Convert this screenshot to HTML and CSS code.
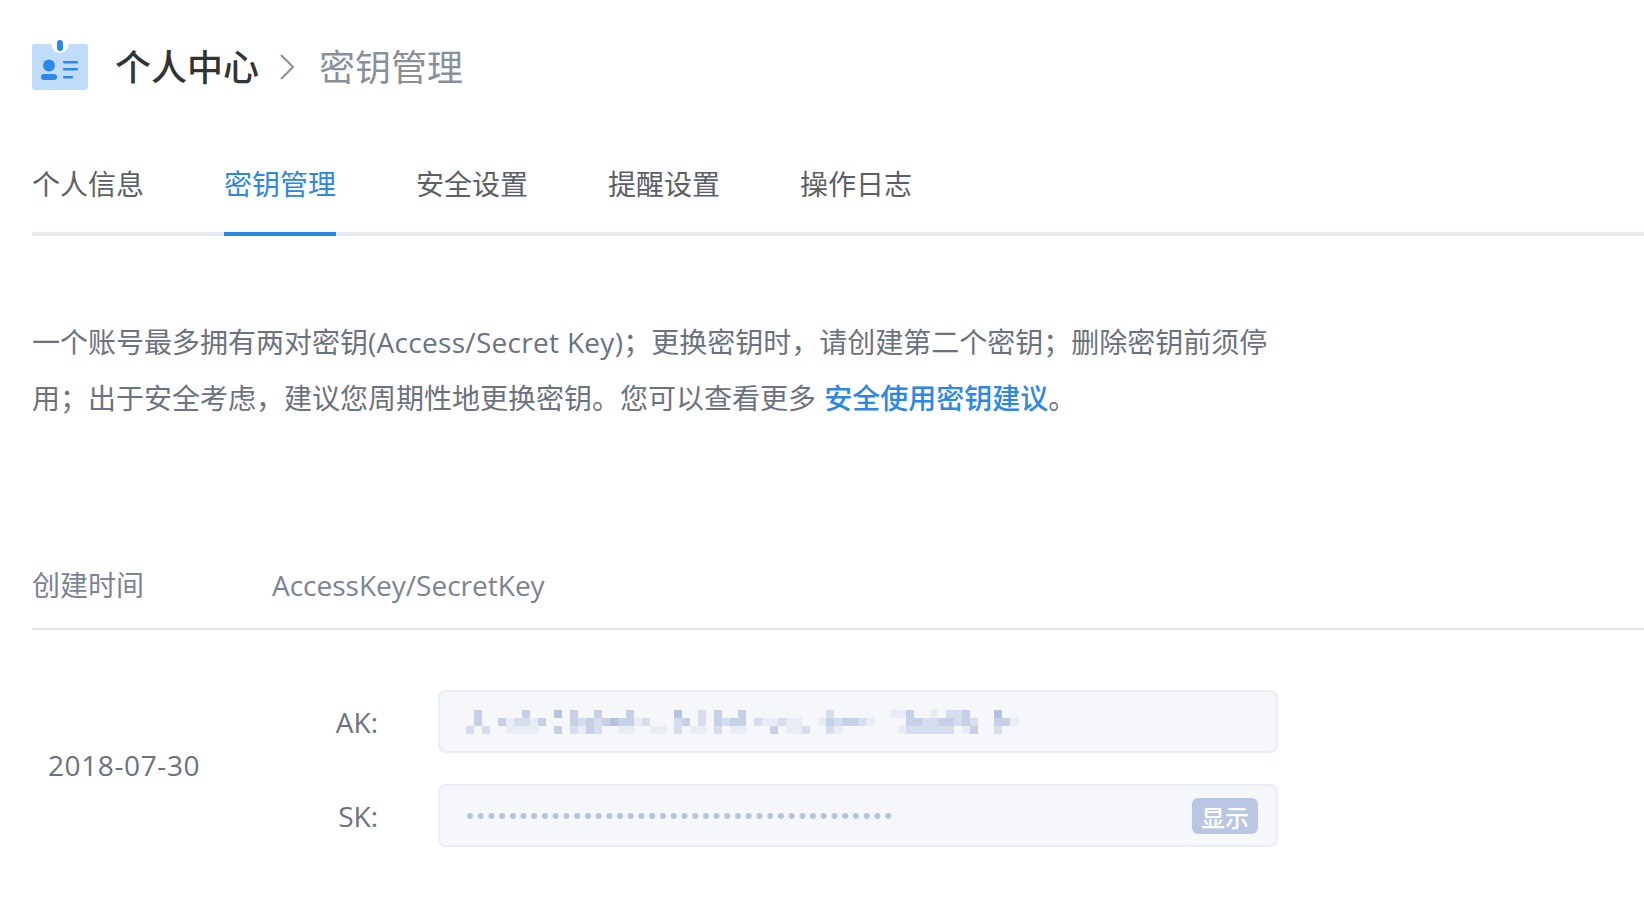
FILE: index.html
```html
<!DOCTYPE html>
<html lang="zh-CN">

<head>
    <meta charset="UTF-8">
    <meta name="viewport" content="width=device-width, initial-scale=1.0">
    <title>密钥管理</title>

    <link rel="stylesheet" href="styles.css">
</head>

<body>
    <div class="main">
        <div class="crumbs">
            <svg class="crumbIcon" width="56" height="50" viewBox="0 0 56 50">
                <path d="M3 4h16a9 9 0 0 0 18 0h16a3 3 0 0 1 3 3v40a3 3 0 0 1-3 3H3a3 3 0 0 1-3-3V7a3 3 0 0 1 3-3z" fill="#bfdcfb"/>
                <rect x="25" y="0" width="6" height="11" rx="3" fill="#2b87e8"/>
                <circle cx="17" cy="25.500" r="6" fill="#2b87e8"/>
                <rect x="9" y="34" width="16" height="6" rx="3" fill="#2b87e8"/>
                <rect x="31" y="21" width="15" height="2.600" rx="1.300" fill="#2b87e8"/>
                <rect x="31" y="28" width="15" height="2.600" rx="1.300" fill="#2b87e8"/>
                <rect x="31" y="36" width="10" height="2.600" rx="1.300" fill="#2b87e8"/>
            </svg>
            <span class="crumbMain">个人中心</span>
            <svg class="crumbSep" width="14" height="26" viewBox="0 0 14 26">
                <path d="M1 1L13 13L1 25" fill="none" stroke="#8a9099" stroke-width="2"/>
            </svg>
            <span class="crumbSub">密钥管理</span>
        </div>

        <div class="tabs">
            <div class="tab">个人信息</div>
            <div class="tab active">密钥管理</div>
            <div class="tab">安全设置</div>
            <div class="tab">提醒设置</div>
            <div class="tab">操作日志</div>
        </div>

        <p class="desc">一个账号最多拥有两对密钥<span class="latin">(Access/Secret Key)</span>；更换密钥时，请创建第二个密钥；删除密钥前须停用；出于安全考虑，建议您周期性地更换密钥。您可以查看更多 <a class="descLink" href="#">安全使用密钥建议</a>。</p>

        <div class="tableHead">
            <div class="colDate">创建时间</div>
            <div>AccessKey/SecretKey</div>
        </div>

        <div class="tableRow">
            <div class="cellDate">2018-07-30</div>
            <div class="keys">
                <div class="keyRow">
                    <span class="keyLabel">AK:</span>
                    <div class="keyBox">
                        <!-- the access key is pixelated in the original -->
                        <svg class="mosaic" width="560" height="24" viewBox="0 0 70 3" shape-rendering="crispEdges">
                            <path fill="#e8ecf5" d="M5 1h1v1H5zM8 1h1v1H8zM21 1h1v1h-1zM37 1h2v1h-2zM40 1h2v1h-2zM44 1h1v1h-1zM50 1h1v1h-1zM68 1h1v1h-1zM5 2h4v1H5zM14 2h1v1h-1zM19 2h2v1h-2zM23 2h2v1h-2zM28 2h2v1h-2zM33 2h2v1h-2zM40 2h2v1h-2zM46 2h1v1h-1zM54 2h1v1h-1zM62 2h1v1h-1zM53 0h2v1h-2zM58 0h1v1h-1z"/>
                            <path fill="#d6ddee" d="M29 0h1v1h-1zM45 0h1v1h-1zM60 0h2v1h-2zM6 1h2v1H6zM14 1h1v1h-1zM16 1h1v1h-1zM22 1h1v1h-1zM26 1h1v1h-1zM29 1h1v1h-1zM32 1h1v1h-1zM36 1h1v1h-1zM39 1h1v1h-1zM46 1h1v1h-1zM49 1h1v1h-1zM57 1h2v1h-2zM61 1h1v1h-1zM63 1h1v1h-1zM0 2h1v1H0zM2 2h1v1H2zM13 2h1v1h-1zM16 2h1v1h-1zM26 2h1v1h-1zM31 2h1v1h-1zM42 2h1v1h-1zM45 2h1v1h-1zM55 2h6v1h-6zM66 2h1v1h-1z"/>
                            <path fill="#c6d0e6" d="M1 0h1v2H1zM7 0h1v1H7zM13 0h1v2h-1zM16 0h1v1h-1zM20 0h1v2h-1zM31 0h1v2h-1zM34 0h1v2h-1zM55 0h1v1h-1zM62 0h1v1h-1zM4 1h1v1H4zM9 1h1v1H9zM15 1h1v2h-1zM17 1h1v1h-1zM19 1h1v1h-1zM27 1h1v1h-1zM33 1h1v1h-1zM45 1h1v1h-1zM47 1h2v1h-2zM55 1h2v1h-2zM59 1h2v1h-2zM62 1h1v1h-1zM66 1h2v1h-2zM11 2h1v1h-1zM38 2h1v1h-1zM63 2h1v1h-1z"/>
                            <path fill="#b5c3de" d="M11 0h1v1h-1zM26 0h1v1h-1zM66 0h1v1h-1zM18 1h1v1h-1z"/>
                        </svg>
                    </div>
                </div>
                <div class="keyRow">
                    <span class="keyLabel">SK:</span>
                    <div class="keyBox">
                        <span class="dots">••••••••••••••••••••••••••••••••••••••••</span>
                        <div class="showBtn">显示</div>
                    </div>
                </div>
            </div>
        </div>
    </div>
</body>

</html>
```

FILE: styles.css
```css
* {
    box-sizing: border-box;
}

body {
    margin: 0;
    background-color: #fff;
    font-family: "Open Sans", "Noto Sans CJK SC", sans-serif;
}

.main {
    height: 904px;
    padding-top: 40px;
    padding-left: 32px;
    overflow: hidden;
}

.crumbs {
    display: flex;
    align-items: center;
    height: 50px;
    font-size: 36px;
}

.crumbMain {
    margin-left: 27px;
    font-weight: 500;
    color: #333;
}

.crumbSep {
    margin: 4px 25px 0 21px;
}

.crumbSub {
    color: #8a9099;
}

.tabs {
    display: flex;
    gap: 80px;
    margin-top: 46px;
    height: 100px;
    border-bottom: 4px solid #e8ebf2;
}

.tab {
    height: 100px;
    padding-top: 28px;
    font-size: 28px;
    line-height: 40px;
    color: #5b6068;
}

.tab.active {
    color: #2b87e8;
    border-bottom: 4px solid #2b87e8;
}

.desc {
    width: 1240px;
    margin: 78px 0 0 0;
    font-size: 28px;
    line-height: 56px;
    color: #6b7280;
}

.latin {
    letter-spacing: .3px;
}

.descLink {
    margin-left: 1px;
    font-weight: 500;
    color: #2b87e8;
    text-decoration: none;
}

.tableHead {
    display: flex;
    margin-top: 139px;
    height: 65px;
    font-size: 28px;
    line-height: 40px;
    color: #7b8494;
    border-bottom: 2px solid #e1e4ee;
}

.colDate {
    width: 240px;
}

.tableRow {
    display: flex;
    align-items: center;
    margin-top: 60px;
}

.cellDate {
    width: 240px;
    padding-left: 16px;
    padding-bottom: 8px;
    font-size: 28px;
    letter-spacing: .6px;
    color: #6b7280;
}

.keys {
    display: flex;
    flex-direction: column;
    gap: 31px;
}

.keyRow {
    display: flex;
    align-items: center;
    gap: 60px;
}

.keyLabel {
    width: 106px;
    text-align: right;
    font-size: 28px;
    color: #6b7280;
}

.keyBox {
    display: flex;
    align-items: center;
    justify-content: space-between;
    width: 840px;
    height: 63px;
    padding: 0 18px 0 26px;
    background-color: #f5f7fb;
    border: 2px solid #ebeef6;
    border-radius: 8px;
}

.mosaic {
    display: block;
    filter: blur(.5px);
}

.dots {
    font-family: "Liberation Sans", sans-serif;
    font-size: 22px;
    letter-spacing: 3.020px;
    color: #b5c3de;
}

.showBtn {
    width: 66px;
    height: 36px;
    padding-top: 2px;
    background-color: #b9c7e4;
    border-radius: 6px;
    text-align: center;
    font-size: 24px;
    font-weight: 500;
    line-height: 36px;
    color: #fff;
}
```
